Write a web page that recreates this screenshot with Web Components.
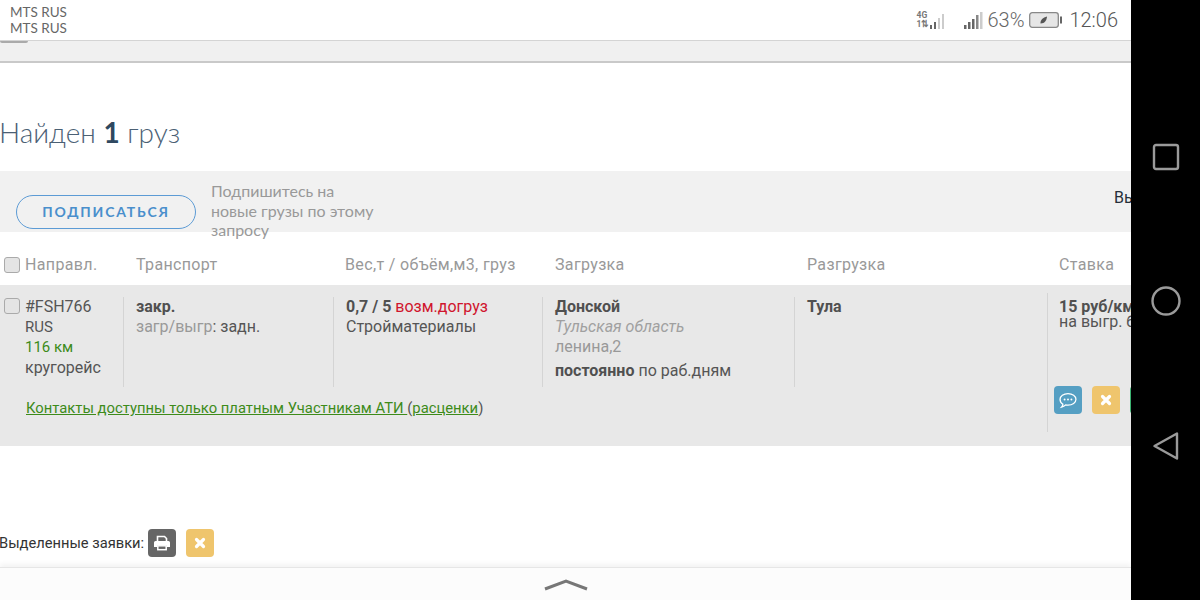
<!DOCTYPE html>
<html lang="ru">
<head>
<meta charset="utf-8">
<title>Найден 1 груз</title>
<style>
  html, body { margin: 0; height: 100%; background: #000; }
  body { display: flex; width: 1200px; height: 600px; overflow: hidden; font-family: Roboto, sans-serif; }
</style>
</head>
<body>
<phone-screen>
  <status-bar></status-bar>
  <top-strip></top-strip>
  <result-heading></result-heading>
  <subscribe-band></subscribe-band>
  <cargo-head></cargo-head>
  <cargo-row></cargo-row>
  <bulk-actions></bulk-actions>
  <bottom-sheet></bottom-sheet>
</phone-screen>
<nav-bar></nav-bar>

<script>
// ICONOS --------------------------------------------------------------------------------------
const ICON_X = `<svg width="12" height="12" viewBox="0 0 12 12"><path d="M2.5 2.5l7 7M9.5 2.5l-7 7" stroke="#fff" stroke-width="3.2" stroke-linecap="round" fill="none"/></svg>`;
const ICON_CHAT = `<svg width="20" height="17" viewBox="0 0 18 16"><path d="M9 1.5c4.200 0 7.500 2.400 7.500 5.400S13.200 12.300 9 12.300c-.8 0-1.500-.1-2.200-.2-1 1-2.300 1.800-3.900 2.200.7-.8 1.200-1.700 1.300-2.800C2.500 10.500 1.500 8.800 1.500 6.900 1.500 3.900 4.800 1.500 9 1.500z" fill="none" stroke="#fff" stroke-width="1.200"/><circle cx="5.800" cy="7" r=".9" fill="#fff"/><circle cx="9" cy="7" r=".9" fill="#fff"/><circle cx="12.200" cy="7" r=".9" fill="#fff"/></svg>`;
const ICON_PRINT = `<svg width="18" height="16" viewBox="0 0 18 16"><path d="M4.500 6V1.500h7l2 2V6" fill="none" stroke="#fff" stroke-width="1.600"/><path d="M2.500 6h13a1.500 1.500 0 0 1 1.500 1.500V12h-3v-2H4v2H1V7.500A1.500 1.500 0 0 1 2.500 6z" fill="#fff"/><rect x="4.800" y="10.800" width="8.400" height="3.900" fill="none" stroke="#fff" stroke-width="1.500"/></svg>`;

/** Crea un elemento sencillo con su plantilla en el shadow-DOM. */
function simple(tag, html){
    customElements.define(tag, class extends HTMLElement{
        constructor(){
            super();
            this.attachShadow({mode: 'open'});
        }
        connectedCallback(){
            this.shadowRoot.innerHTML = html;
        }
    });
}

simple('phone-screen', `
    <style>
        :host{ display: flex; flex-direction: column; width: 1131px; height: 600px; background: #fff; overflow: hidden; position: relative; flex: none; }
    </style>
    <slot></slot>
`);

simple('status-bar', `
    <style>
        :host{ display: flex; align-items: center; justify-content: space-between; flex: none; box-sizing: border-box; height: 41px; padding: 0 13px 0 10px; background: #fff; border-bottom: 1px solid #d4d4d4; color: #666; }
        #carriers{ font: 13.500px/16px Lato, sans-serif; }
        #right{ display: flex; align-items: center; }
        #net{ display: grid; grid-template-columns: auto auto; align-items: end; column-gap: 1px; margin-right: 18px; }
        #net small{ font: 700 8.500px/9px Roboto, sans-serif; color: #777; display: block; }
        #pct{ font: 300 20px/24px Roboto, sans-serif; margin-left: 4px; color: #666; }
        #time{ font: 300 20px/24px Roboto, sans-serif; margin-left: 7px; color: #555; }
        svg{ display: block; }
    </style>
    <div id="carriers">MTS RUS<br>MTS RUS</div>
    <div id="right">
        <div id="net">
            <div><small>4G</small><small>1⇅</small></div>
            <svg width="16" height="17" viewBox="0 0 16 17"><rect x="0" y="13" width="2" height="4" fill="#666"/><rect x="4" y="10" width="2" height="7" fill="#666"/><rect x="8" y="6" width="2" height="11" fill="#ccc"/><rect x="12" y="2" width="2" height="15" fill="#ccc"/></svg>
        </div>
        <svg width="19" height="17" viewBox="0 0 19 17"><rect x="0" y="13" width="2.500" height="4" fill="#666"/><rect x="4" y="10" width="2.500" height="7" fill="#666"/><rect x="8" y="7" width="2.500" height="10" fill="#666"/><rect x="12" y="3" width="2.500" height="14" fill="#888"/><rect x="16" y="0" width="2.500" height="17" fill="#ccc"/></svg>
        <span id="pct">63%</span>
        <svg width="33" height="16" viewBox="0 0 33 16" style="margin-left:5px"><rect x=".7" y=".7" width="28.600" height="14.600" rx="2.500" fill="#e6e6e6" stroke="#888" stroke-width="1.300"/><path d="M11.500 11.500c-.3-3.500 2.500-6 6.500-7-.2 3.500-2 7-6.500 7z" fill="#555"/><rect x="31" y="4.500" width="2" height="7" fill="#666"/></svg>
        <span id="time">12:06</span>
    </div>
`);

simple('top-strip', `
    <style>
        :host{ display: block; flex: none; box-sizing: border-box; height: 22px; background: #f0f0f0; border-bottom: 2px solid #c9c9c9; }
        div{ width: 28px; height: 2px; background: #aaa; border-radius: 0 0 4px 4px; }
    </style>
    <div></div>
`);

simple('result-heading', `
    <style>
        :host{ display: block; flex: none; box-sizing: border-box; height: 108px; padding-top: 52px; margin-left: -1px; color: #4b6074; font: 300 28px/34px Lato, sans-serif; }
        b{ font-weight: 700; color: #2f4860; }
    </style>
    Найден <b>1</b> груз
`);

simple('subscribe-band', `
    <style>
        :host{ display: flex; flex: none; box-sizing: border-box; height: 61px; background: #f1f1f1; padding: 24px 0 0 16px; position: relative; }
        button{ box-sizing: border-box; width: 180px; height: 34px; border: 1.500px solid #5c9bd5; border-radius: 17px; background: #f1f1f1; color: #4a8fcc; font: 700 14px/1 Lato, sans-serif; letter-spacing: 1.800px; padding: 0; }
        p{ margin: -14px 0 0 15px; width: 170px; color: #999; font: 16px/19.500px Lato, sans-serif; height: 59px; }
        #more{ position: absolute; left: 1114px; top: 17px; font: 16px/20px Roboto, sans-serif; color: #26303a; }
    </style>
    <button>ПОДПИСАТЬСЯ</button>
    <p>Подпишитесь на новые грузы по этому запросу</p>
    <span id="more">Вы</span>
`);

simple('cargo-head', `
    <style>
        :host{ display: grid; flex: none; grid-template-columns: 136px 209px 210px 252px 252px 72px; align-items: start; box-sizing: border-box; height: 53px; padding-top: 23px; color: #999; font: 16px/20px Roboto, sans-serif; letter-spacing: .35px; white-space: nowrap; }
        .first{ display: flex; align-items: center; padding-left: 4px; gap: 5px; }
        input{ appearance: none; box-sizing: border-box; width: 16px; height: 16px; margin: 0; border: 1.500px solid #aaa; border-radius: 3px; background: #e4e4e4; flex: none; }
    </style>
    <div class="first"><input type="checkbox"><span>Направл.</span></div>
    <div>Транспорт</div>
    <div>Вес,т / объём,м3, груз</div>
    <div>Загрузка</div>
    <div>Разгрузка</div>
    <div>Ставка</div>
`);

simple('cargo-row', `
    <style>
        :host{ display: grid; flex: none; grid-template-columns: 123px 210px 209px 252px 253px 84px; grid-template-rows: 90px auto; box-sizing: border-box; height: 161px; padding-top: 12px; background: #e8e8e8; color: #555; font: 16px/20px Roboto, sans-serif; white-space: nowrap; }
        .cell{ box-sizing: border-box; padding: 0 0 0 12px; border-left: 1px solid #d4d4d4; }
        .first{ border: 0; padding: 0 0 0 4px; display: flex; gap: 5px; align-items: flex-start; }
        input{ appearance: none; box-sizing: border-box; width: 16px; height: 16px; margin: 1px 0 0; border: 1.500px solid #aaa; border-radius: 3px; background: #e4e4e4; flex: none; }
        b{ font-weight: 700; color: #505050; }
        .rus{ font-size: 15px; }
        .km{ color: #3d8b1a; font-size: 15px; line-height: 21px; }
        .mut{ color: #999; }
        .red{ color: #d0152d; }
        i{ color: #a0a0a0; }
        .when{ display: block; margin-top: 4px; }
        #rate{ grid-column: 6; grid-row: 1 / 3; margin-top: -4px; height: 139px; padding: 6px 0 0 0; line-height: 15px; }
        #rate span{ display: block; margin-top: -1px; padding-left: 11px; }
        #rate b{ display: block; line-height: 16px; padding-left: 11px; }
        #acts{ display: flex; gap: 10px; margin: 57px 0 0 6px; }
        #contacts{ grid-column: 1 / 6; grid-row: 2; padding: 11px 0 0 26px; font-size: 14.800px; line-height: 20px; color: #555; }
        a{ color: #3d8b1a; text-decoration: underline; }
        .btn{ display: flex; align-items: center; justify-content: center; flex: none; width: 28px; height: 28px; border-radius: 4px; box-sizing: border-box; }
    </style>
    <div class="cell first">
        <input type="checkbox">
        <div>
            <div>#FSH766</div>
            <div class="rus">RUS</div>
            <div class="km">116 км</div>
            <div>кругорейс</div>
        </div>
    </div>
    <div class="cell"><b>закр.</b><br><span class="mut">загр/выгр</span>: задн.</div>
    <div class="cell"><b>0,7 / 5</b> <span class="red">возм.догруз</span><br>Стройматериалы</div>
    <div class="cell"><b>Донской</b><br><i>Тульская область</i><br><span class="mut">ленина,2</span><span class="when"><b>постоянно</b> по раб.дням</span></div>
    <div class="cell"><b>Тула</b></div>
    <div class="cell" id="rate">
        <b>15 руб/км</b>
        <span>на выгр. б</span>
        <div id="acts">
            <div class="btn" style="background:#559fc3">${ICON_CHAT}</div>
            <div class="btn" style="background:#efc56d">${ICON_X}</div>
            <div class="btn" style="background:#3cb371"></div>
        </div>
    </div>
    <div id="contacts"><a href="#">Контакты доступны только платным Участникам АТИ </a>(<a href="#">расценки</a>)</div>
`);

simple('bulk-actions', `
    <style>
        :host{ display: flex; align-items: center; flex: none; box-sizing: border-box; height: 121px; padding-top: 73px; color: #333; font: 14.700px/20px Roboto, sans-serif; }
        span{ margin-right: 4px; margin-left: -1px; }
        .btn{ display: flex; align-items: center; justify-content: center; width: 28px; height: 28px; border-radius: 4px; box-sizing: border-box; margin-right: 10px; }
    </style>
    <span>Выделенные заявки:</span>
    <div class="btn" style="background:#666">${ICON_PRINT}</div>
    <div class="btn" style="background:#efc56d">${ICON_X}</div>
`);

simple('bottom-sheet', `
    <style>
        :host{ display: flex; justify-content: center; flex: 1; padding-top: 11px; background: #fcfcfc; border-top: 1px solid #e6e6e6; box-shadow: 0 -3px 5px rgba(0,0,0,.05); }
        svg{ display: block; }
    </style>
    <svg width="46" height="12" viewBox="0 0 46 12"><path d="M2 10L23 2l21 8" fill="none" stroke="#777" stroke-width="3"/></svg>
`);

simple('nav-bar', `
    <style>
        :host{ display: flex; flex-direction: column; align-items: center; flex: none; box-sizing: border-box; width: 69px; height: 600px; padding-top: 143px; gap: 115px; background: #000; }
        svg{ display: block; }
    </style>
    <svg width="28" height="28" viewBox="0 0 28 28"><rect x="2" y="2" width="24" height="24" rx="2" fill="none" stroke="#9a9a9a" stroke-width="2.400"/></svg>
    <svg width="30" height="30" viewBox="0 0 30 30"><circle cx="15" cy="15" r="13.500" fill="none" stroke="#9a9a9a" stroke-width="2.400"/></svg>
    <svg width="28" height="30" viewBox="0 0 28 30"><path d="M25 2.500v25L2.500 15z" fill="none" stroke="#9a9a9a" stroke-width="2.400" stroke-linejoin="round"/></svg>
`);
</script>
</body>
</html>
